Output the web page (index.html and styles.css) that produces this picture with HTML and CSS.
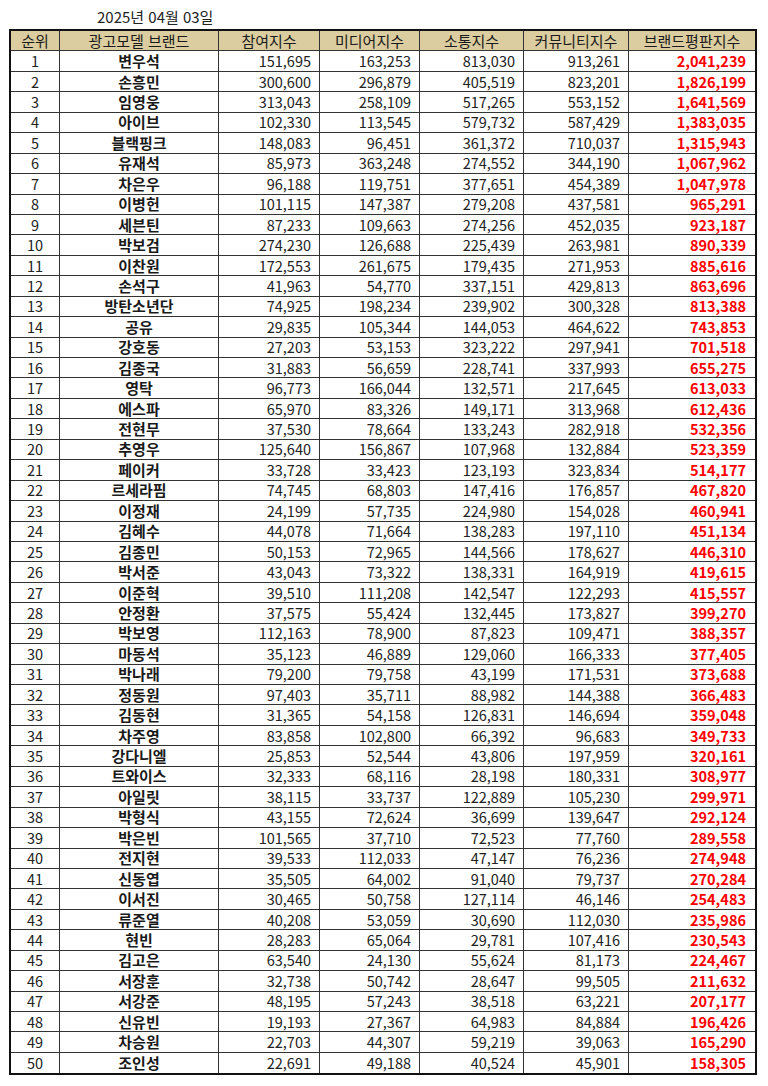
FILE: index.html
```html
<!DOCTYPE html>
<html lang="ko">
<head>
<meta charset="utf-8">
<title>광고모델 브랜드평판지수</title>
<link rel="stylesheet" href="styles.css">
</head>
<body>
<div class="date">2025년 04월 03일</div>
<table class="rank">
<colgroup>
<col class="c-rank"><col class="c-name"><col class="c-a"><col class="c-b"><col class="c-c"><col class="c-d"><col class="c-e">
</colgroup>
<thead>
<tr><th>순위</th><th>광고모델 브랜드</th><th>참여지수</th><th>미디어지수</th><th>소통지수</th><th>커뮤니티지수</th><th>브랜드평판지수</th></tr>
</thead>
<tbody>
<tr><td>1</td><td>변우석</td><td>151,695</td><td>163,253</td><td>813,030</td><td>913,261</td><td>2,041,239</td></tr>
<tr><td>2</td><td>손흥민</td><td>300,600</td><td>296,879</td><td>405,519</td><td>823,201</td><td>1,826,199</td></tr>
<tr><td>3</td><td>임영웅</td><td>313,043</td><td>258,109</td><td>517,265</td><td>553,152</td><td>1,641,569</td></tr>
<tr><td>4</td><td>아이브</td><td>102,330</td><td>113,545</td><td>579,732</td><td>587,429</td><td>1,383,035</td></tr>
<tr><td>5</td><td>블랙핑크</td><td>148,083</td><td>96,451</td><td>361,372</td><td>710,037</td><td>1,315,943</td></tr>
<tr><td>6</td><td>유재석</td><td>85,973</td><td>363,248</td><td>274,552</td><td>344,190</td><td>1,067,962</td></tr>
<tr><td>7</td><td>차은우</td><td>96,188</td><td>119,751</td><td>377,651</td><td>454,389</td><td>1,047,978</td></tr>
<tr><td>8</td><td>이병헌</td><td>101,115</td><td>147,387</td><td>279,208</td><td>437,581</td><td>965,291</td></tr>
<tr><td>9</td><td>세븐틴</td><td>87,233</td><td>109,663</td><td>274,256</td><td>452,035</td><td>923,187</td></tr>
<tr><td>10</td><td>박보검</td><td>274,230</td><td>126,688</td><td>225,439</td><td>263,981</td><td>890,339</td></tr>
<tr><td>11</td><td>이찬원</td><td>172,553</td><td>261,675</td><td>179,435</td><td>271,953</td><td>885,616</td></tr>
<tr><td>12</td><td>손석구</td><td>41,963</td><td>54,770</td><td>337,151</td><td>429,813</td><td>863,696</td></tr>
<tr><td>13</td><td>방탄소년단</td><td>74,925</td><td>198,234</td><td>239,902</td><td>300,328</td><td>813,388</td></tr>
<tr><td>14</td><td>공유</td><td>29,835</td><td>105,344</td><td>144,053</td><td>464,622</td><td>743,853</td></tr>
<tr><td>15</td><td>강호동</td><td>27,203</td><td>53,153</td><td>323,222</td><td>297,941</td><td>701,518</td></tr>
<tr><td>16</td><td>김종국</td><td>31,883</td><td>56,659</td><td>228,741</td><td>337,993</td><td>655,275</td></tr>
<tr><td>17</td><td>영탁</td><td>96,773</td><td>166,044</td><td>132,571</td><td>217,645</td><td>613,033</td></tr>
<tr><td>18</td><td>에스파</td><td>65,970</td><td>83,326</td><td>149,171</td><td>313,968</td><td>612,436</td></tr>
<tr><td>19</td><td>전현무</td><td>37,530</td><td>78,664</td><td>133,243</td><td>282,918</td><td>532,356</td></tr>
<tr><td>20</td><td>추영우</td><td>125,640</td><td>156,867</td><td>107,968</td><td>132,884</td><td>523,359</td></tr>
<tr><td>21</td><td>페이커</td><td>33,728</td><td>33,423</td><td>123,193</td><td>323,834</td><td>514,177</td></tr>
<tr><td>22</td><td>르세라핌</td><td>74,745</td><td>68,803</td><td>147,416</td><td>176,857</td><td>467,820</td></tr>
<tr><td>23</td><td>이정재</td><td>24,199</td><td>57,735</td><td>224,980</td><td>154,028</td><td>460,941</td></tr>
<tr><td>24</td><td>김혜수</td><td>44,078</td><td>71,664</td><td>138,283</td><td>197,110</td><td>451,134</td></tr>
<tr><td>25</td><td>김종민</td><td>50,153</td><td>72,965</td><td>144,566</td><td>178,627</td><td>446,310</td></tr>
<tr><td>26</td><td>박서준</td><td>43,043</td><td>73,322</td><td>138,331</td><td>164,919</td><td>419,615</td></tr>
<tr><td>27</td><td>이준혁</td><td>39,510</td><td>111,208</td><td>142,547</td><td>122,293</td><td>415,557</td></tr>
<tr><td>28</td><td>안정환</td><td>37,575</td><td>55,424</td><td>132,445</td><td>173,827</td><td>399,270</td></tr>
<tr><td>29</td><td>박보영</td><td>112,163</td><td>78,900</td><td>87,823</td><td>109,471</td><td>388,357</td></tr>
<tr><td>30</td><td>마동석</td><td>35,123</td><td>46,889</td><td>129,060</td><td>166,333</td><td>377,405</td></tr>
<tr><td>31</td><td>박나래</td><td>79,200</td><td>79,758</td><td>43,199</td><td>171,531</td><td>373,688</td></tr>
<tr><td>32</td><td>정동원</td><td>97,403</td><td>35,711</td><td>88,982</td><td>144,388</td><td>366,483</td></tr>
<tr><td>33</td><td>김동현</td><td>31,365</td><td>54,158</td><td>126,831</td><td>146,694</td><td>359,048</td></tr>
<tr><td>34</td><td>차주영</td><td>83,858</td><td>102,800</td><td>66,392</td><td>96,683</td><td>349,733</td></tr>
<tr><td>35</td><td>강다니엘</td><td>25,853</td><td>52,544</td><td>43,806</td><td>197,959</td><td>320,161</td></tr>
<tr><td>36</td><td>트와이스</td><td>32,333</td><td>68,116</td><td>28,198</td><td>180,331</td><td>308,977</td></tr>
<tr><td>37</td><td>아일릿</td><td>38,115</td><td>33,737</td><td>122,889</td><td>105,230</td><td>299,971</td></tr>
<tr><td>38</td><td>박형식</td><td>43,155</td><td>72,624</td><td>36,699</td><td>139,647</td><td>292,124</td></tr>
<tr><td>39</td><td>박은빈</td><td>101,565</td><td>37,710</td><td>72,523</td><td>77,760</td><td>289,558</td></tr>
<tr><td>40</td><td>전지현</td><td>39,533</td><td>112,033</td><td>47,147</td><td>76,236</td><td>274,948</td></tr>
<tr><td>41</td><td>신동엽</td><td>35,505</td><td>64,002</td><td>91,040</td><td>79,737</td><td>270,284</td></tr>
<tr><td>42</td><td>이서진</td><td>30,465</td><td>50,758</td><td>127,114</td><td>46,146</td><td>254,483</td></tr>
<tr><td>43</td><td>류준열</td><td>40,208</td><td>53,059</td><td>30,690</td><td>112,030</td><td>235,986</td></tr>
<tr><td>44</td><td>현빈</td><td>28,283</td><td>65,064</td><td>29,781</td><td>107,416</td><td>230,543</td></tr>
<tr><td>45</td><td>김고은</td><td>63,540</td><td>24,130</td><td>55,624</td><td>81,173</td><td>224,467</td></tr>
<tr><td>46</td><td>서장훈</td><td>32,738</td><td>50,742</td><td>28,647</td><td>99,505</td><td>211,632</td></tr>
<tr><td>47</td><td>서강준</td><td>48,195</td><td>57,243</td><td>38,518</td><td>63,221</td><td>207,177</td></tr>
<tr><td>48</td><td>신유빈</td><td>19,193</td><td>27,367</td><td>64,983</td><td>84,884</td><td>196,426</td></tr>
<tr><td>49</td><td>차승원</td><td>22,703</td><td>44,307</td><td>59,219</td><td>39,063</td><td>165,290</td></tr>
<tr><td>50</td><td>조인성</td><td>22,691</td><td>49,188</td><td>40,524</td><td>45,901</td><td>158,305</td></tr>
</tbody>
</table>
</body>
</html>
```
FILE: styles.css
```css
html, body {
  margin: 0;
  padding: 0;
  background: #ffffff;
}
body {
  padding: 0 0 0 9px;
  font-family: "Noto Sans CJK KR", "Noto Sans", "Liberation Sans", sans-serif;
  color: #222222;
}
.date {
  height: 29px;
  box-sizing: border-box;
  padding: 7px 0 0 88px;
  font-size: 15px;
  line-height: 20px;
  color: #222222;
}
.rank {
  table-layout: fixed;
  width: 748px;
  border-collapse: separate;
  border-spacing: 0;
  border: 2px solid #111111;
  font-size: 14.5px;
}
.c-rank { width: 49px; }
.c-name { width: 159px; }
.c-a { width: 101px; }
.c-b { width: 100px; }
.c-c { width: 104px; }
.c-d { width: 105px; }
.c-e { width: auto; }
.rank tr {
  height: 20.45px;
}
.rank th, .rank td {
  padding: 0 8px 0 0;
  border-right: 1px solid #333333;
  border-bottom: 1px solid #333333;
  line-height: 18px;
  white-space: nowrap;
  overflow: hidden;
  text-align: right;
  vertical-align: middle;
}
.rank th:last-child, .rank td:last-child {
  border-right: none;
}
.rank tbody tr:last-child td {
  border-bottom: none;
}
.rank th {
  background: #dbcd9f;
  font-weight: normal;
  font-size: 15px;
  text-align: center;
  padding: 0;
  color: #1a1a1a;
}
.rank td:first-child {
  text-align: center;
  padding: 0;
}
.rank td:nth-child(2) {
  text-align: center;
  padding: 0;
  font-weight: bold;
  font-size: 15px;
  color: #1a1a1a;
}
.rank td:last-child {
  color: #ff0000;
  font-weight: bold;
  padding-right: 9px;
}
```
